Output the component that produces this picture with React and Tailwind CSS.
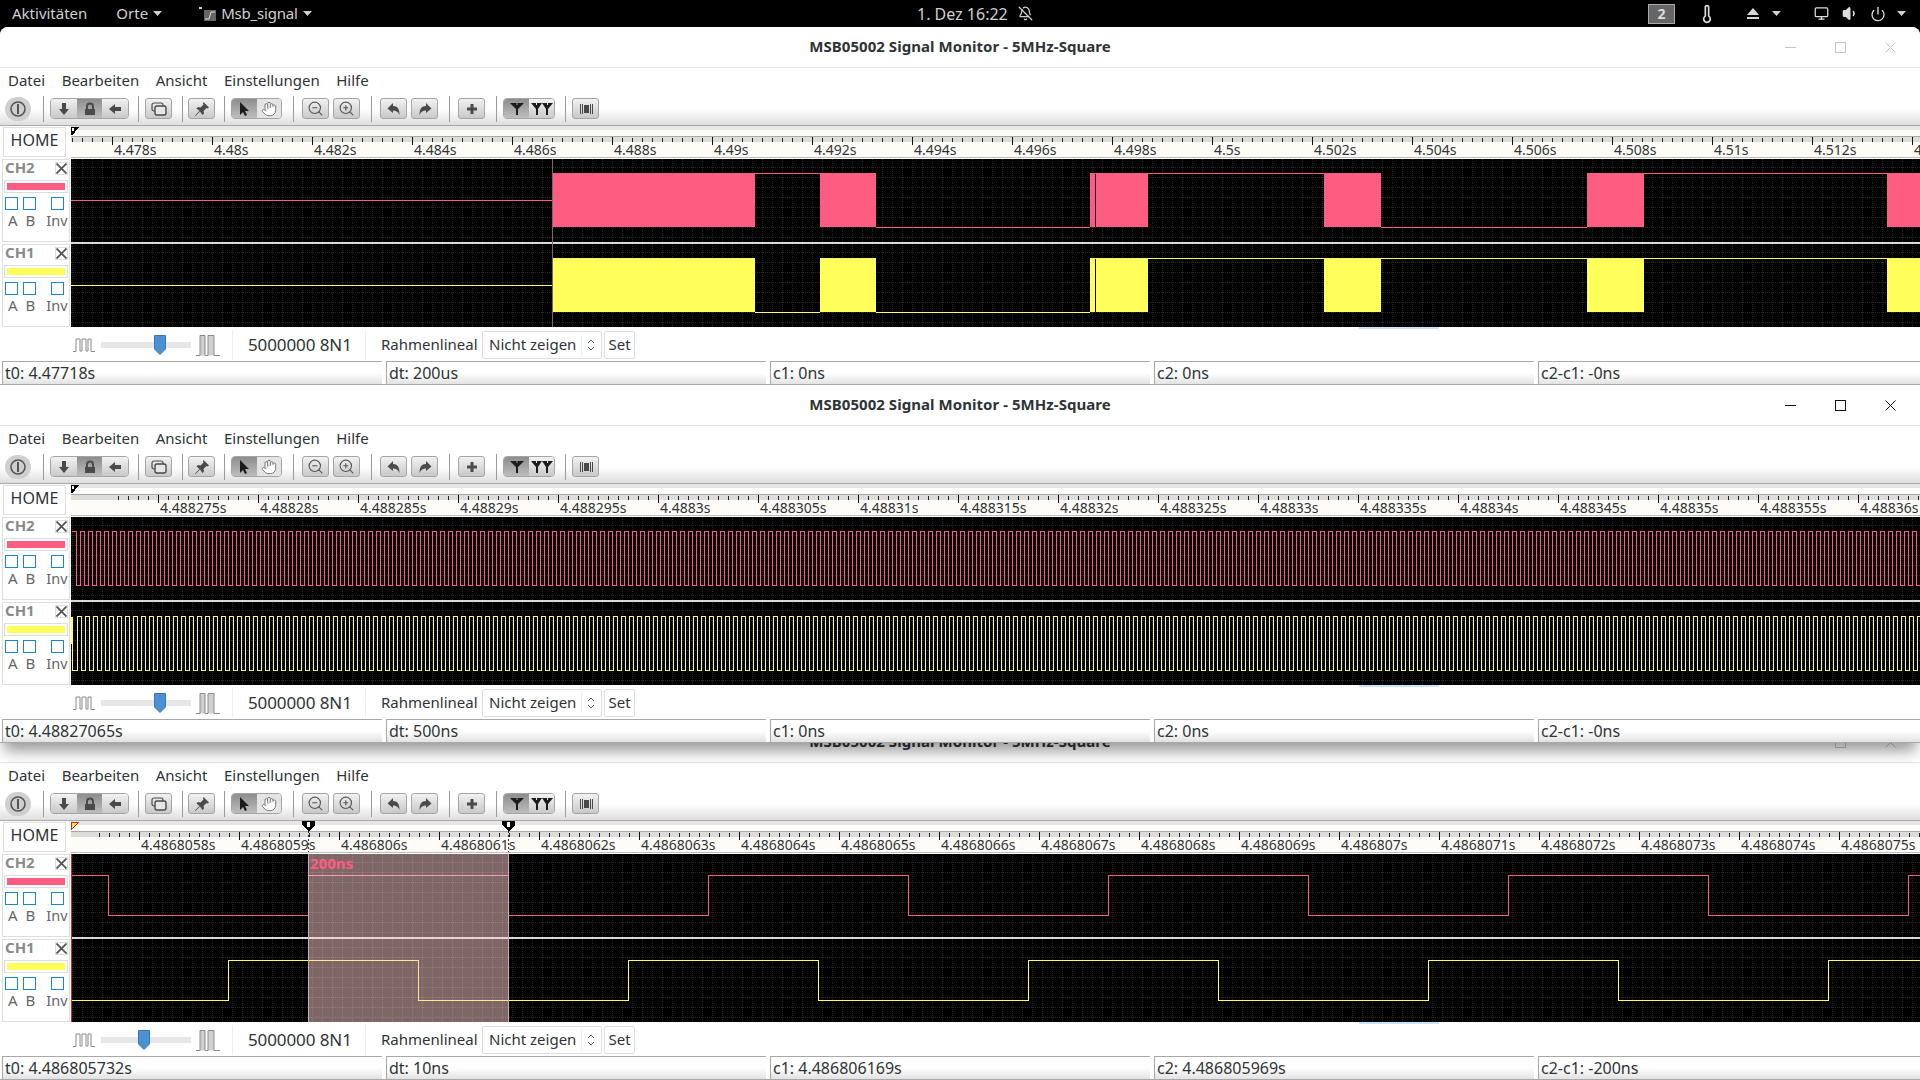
import { useId } from 'react';
import { BellOff, Hand, Monitor, Power, Thermometer, Volume1, ZoomIn, ZoomOut } from 'lucide-react';

const PINK = '#ff5c82';
const YELLOW = '#ffff5c';

// builds the 400ns square wave of the middle window, period is 8px
const squareWave = (start, y0, y1, end) => {
  let d = `M${start} ${y0}`;
  let x = start;
  let y = y0;
  while (x < end) {
    x += 4;
    d += `H${x}`;
    y = y === y0 ? y1 : y0;
    d += `V${y}`;
  }
  return d;
};

const blocks1 = [[552, 755], [820, 876], [1090, 1148], [1324, 1381], [1587, 1644], [1887, 1920]];

const windows = [
  {
    focused: false,
    rounded: true,
    firstTick: 112,
    labels: ['4.478s', '4.48s', '4.482s', '4.484s', '4.486s', '4.488s', '4.49s', '4.492s', '4.494s', '4.496s', '4.498s', '4.5s', '4.502s', '4.504s', '4.506s', '4.508s', '4.51s', '4.512s', '4.514s'],
    ch2: { blocks: blocks1, d: 'M71 41.5H552M755 14.5H820M876 68.5H1090M1148 14.5H1324M1381 68.5H1587M1644 14.5H1887' },
    ch1: { blocks: blocks1, d: 'M71 41.5H552M755 68.5H820M876 68.5H1090M1148 14.5H1324M1381 14.5H1587M1644 14.5H1887' },
    status: ['t0: 4.47718s', 'dt: 200us', 'c1: 0ns', 'c2: 0ns', 'c2-c1: -0ns'],
    slider: 'left-[53px]',
  },
  {
    focused: true,
    firstTick: 158,
    labels: ['4.488275s', '4.48828s', '4.488285s', '4.48829s', '4.488295s', '4.4883s', '4.488305s', '4.48831s', '4.488315s', '4.48832s', '4.488325s', '4.48833s', '4.488335s', '4.48834s', '4.488345s', '4.48835s', '4.488355s', '4.48836s'],
    ch2: { d: squareWave(72, 14.5, 68.5, 1920) },
    ch1: { d: 'M71.5 14.5V41.5M72.5 14.5V68.5H77.5V14.5' + squareWave(77.5, 14.5, 68.5, 1920).replace('M77.5 14.5', '') },
    status: ['t0: 4.48827065s', 'dt: 500ns', 'c1: 0ns', 'c2: 0ns', 'c2-c1: -0ns'],
    slider: 'left-[53px]',
  },
  {
    focused: false,
    firstTick: 139,
    labels: ['4.4868058s', '4.4868059s', '4.486806s', '4.4868061s', '4.4868062s', '4.4868063s', '4.4868064s', '4.4868065s', '4.4868066s', '4.4868067s', '4.4868068s', '4.4868069s', '4.486807s', '4.4868071s', '4.4868072s', '4.4868073s', '4.4868074s', '4.4868075s'],
    ch2: { d: 'M71 21.5H108.5V61.5H308.5M308.5 21.5H508.5M508.5 61.5H708.5V21.5H908.5V61.5H1108.5V21.5H1308.5V61.5H1508.5V21.5H1708.5V61.5H1908.5V21.5H1920' },
    ch1: { d: 'M71 61.5H228.5V21.5H418.5V61.5H628.5V21.5H818.5V61.5H1028.5V21.5H1218.5V61.5H1428.5V21.5H1618.5V61.5H1828.5V21.5H1920' },
    status: ['t0: 4.486805732s', 'dt: 10ns', 'c1: 4.486806169s', 'c2: 4.486805969s', 'c2-c1: -200ns'],
    slider: 'left-[37px]',
    selection: true,
  },
];

function Caret({ className = '' }) {
  return (
    <svg width="9" height="5" viewBox="0 0 9 5" className={className}>
      <polygon points="0,0 9,0 4.5,5" fill="#d0d0d0" />
    </svg>
  );
}

function TopBar() {
  return (
    <div className="h-[27px] bg-black flex items-center text-[15px] text-[#d0d0d0] shrink-0">
      <div className="w-[917px] flex items-center shrink-0">
        <span className="ml-[12px]">Aktivitäten</span>
        <span className="ml-[29px]">Orte</span>
        <Caret className="ml-[5px]" />
        <svg width="18" height="16" viewBox="0 0 18 16" className="ml-[37px]">
          <rect x="0" y="1" width="3" height="2" fill="#ccc" />
          <rect x="5" y="4" width="12" height="11" fill="#666" />
          <path d="M6 13h4l2-7h4" fill="none" stroke="#ddd" strokeWidth="1" />
        </svg>
        <span className="ml-[4px] tracking-[-0.2px]">Msb_signal</span>
        <Caret className="ml-[5px]" />
      </div>
      <span className="text-[16px]">1. Dez 16:22</span>
      <BellOff size={15} strokeWidth={2} className="ml-[10px] text-[#d0d0d0]" />
      <div className="ml-auto flex items-center pr-[14px]">
        <div className="w-[27px] h-[20px] bg-[#666] border border-[#aaa] flex items-center justify-center text-[14px] font-bold text-[#ddd]">2</div>
        <Thermometer size={20} strokeWidth={2} className="ml-[22px] text-[#ddd]" />
        <svg width="12" height="12" viewBox="0 0 12 12" className="ml-[30px]">
          <polygon points="6,0 12,7 0,7" fill="#d8d8d8" />
          <rect x="0" y="9" width="12" height="2" fill="#d8d8d8" />
        </svg>
        <Caret className="ml-[13px]" />
        <Monitor size={15} strokeWidth={2} className="ml-[33px] text-[#ddd]" />
        <Volume1 size={17} strokeWidth={2} fill="#ddd" className="ml-[13px] text-[#ddd]" />
        <Power size={16} strokeWidth={2} className="ml-[11px] text-[#ddd]" />
        <Caret className="ml-[11px]" />
      </div>
    </div>
  );
}

function TitleBar({ focused, rounded }) {
  const stroke = focused ? '#111' : '#c4c4c4';
  return (
    <div className={`h-[41px] shrink-0 grid grid-cols-[1fr_auto_1fr] items-center border-b border-[#e4e4e4] bg-white ${rounded ? 'rounded-t-[8px]' : ''}`}>
      <div />
      <div className="pb-px font-bold text-[15px] tracking-[0.05px] text-[#2e3436]">MSB05002 Signal Monitor - 5MHz-Square</div>
      <div className="flex justify-end items-center gap-[39px] pr-[24px]">
        <svg width="11" height="11" viewBox="0 0 11 11"><path d="M0 5.5H11" stroke={stroke} /></svg>
        <svg width="11" height="11" viewBox="0 0 11 11"><rect x="0.5" y="0.5" width="10" height="10" fill="none" stroke={stroke} /></svg>
        <svg width="11" height="11" viewBox="0 0 11 11"><path d="M0.5 0.5L10.5 10.5M10.5 0.5L0.5 10.5" stroke={stroke} /></svg>
      </div>
    </div>
  );
}

function MenuBar() {
  return (
    <div className="h-[25px] shrink-0 flex items-center gap-[16.5px] pl-[8px] pb-px text-[15px] text-[#2e3436] bg-white">
      <span>Datei</span>
      <span>Bearbeiten</span>
      <span>Ansicht</span>
      <span>Einstellungen</span>
      <span>Hilfe</span>
    </div>
  );
}

function Sep({ className = '' }) {
  return <div className={`w-px h-[26px] bg-[#9a9a9a] shrink-0 ${className}`} />;
}

function ToolBtn({ children, className = '' }) {
  return (
    <div className={`w-[27px] h-[21px] shrink-0 flex items-center justify-center rounded-[3px] border border-[#a4a4a4] bg-gradient-to-b from-[#f2f2f2] to-[#c9c9c9] ${className}`}>
      {children}
    </div>
  );
}

function Seg({ children, active, className = '' }) {
  return (
    <div className={`h-full flex-1 flex items-center justify-center ${active ? 'bg-gradient-to-b from-[#8e8e8e] to-[#bdbdbd]' : 'bg-gradient-to-b from-[#f2f2f2] to-[#c9c9c9]'} ${className}`}>
      {children}
    </div>
  );
}

function Glyph({ children }) {
  return <svg width="16" height="16" viewBox="0 0 16 16" fill="#4a4a4a">{children}</svg>;
}

function ToolBar() {
  return (
    <div className="h-[33px] shrink-0 flex items-center pl-[5px] pb-[1px] border-b border-[#a8a8a8] bg-gradient-to-b from-white via-white to-[#dedede]">
      <div className="w-[26px] h-[24px] shrink-0 rounded-full bg-[#cfcfcf] flex items-center justify-center">
        <svg width="18" height="18" viewBox="0 0 18 18">
          <circle cx="9" cy="9" r="7" fill="none" stroke="#555" strokeWidth="1.6" />
          <rect x="8" y="4" width="2" height="10" fill="#555" />
        </svg>
      </div>
      <Sep className="ml-[12px]" />
      <div className="ml-[6px] w-[79px] h-[21px] shrink-0 flex rounded-[4px] border border-[#a4a4a4] overflow-hidden">
        <Seg><Glyph><path d="M6 2h4v6h3l-5 6-5-6h3z" /></Glyph></Seg>
        <Seg active><Glyph><path d="M4 8V5.5a4 4 0 0 1 8 0V8h1v6H3V8zm2 0h4V5.5a2 2 0 0 0-4 0z" /></Glyph></Seg>
        <Seg><Glyph><path d="M14 6v4H8v3L2 8l6-5v3z" /></Glyph></Seg>
      </div>
      <Sep className="ml-[9px]" />
      <ToolBtn className="ml-[6px]">
        <Glyph>
          <rect x="1" y="2" width="11" height="8" rx="2" fill="none" stroke="#4a4a4a" strokeWidth="1.2" />
          <rect x="4" y="5" width="11" height="9" rx="2" fill="#e6e6e6" stroke="#4a4a4a" strokeWidth="1.4" />
        </Glyph>
      </ToolBtn>
      <Sep className="ml-[10px]" />
      <ToolBtn className="ml-[5px]">
        <Glyph><path d="M9.5 1l5.5 5.5-1.5 1-1-.5-3 3 .5 2.5-1.5 1.5L6 10.5 1.500 15 1 14.500 5.500 10 2.500 7.500 4 6l2.500.5 3-3-.5-1z" /></Glyph>
      </ToolBtn>
      <Sep className="ml-[9px]" />
      <div className="ml-[6px] w-[51px] h-[21px] shrink-0 flex rounded-[4px] border border-[#a4a4a4] overflow-hidden">
        <Seg active><Glyph><path d="M4 1v13l3-3 2 4 2-1-2-4h4z" fill="#1c1c1c" /></Glyph></Seg>
        <Seg className="bg-none bg-[#e4e4e4]"><Hand size={16} strokeWidth={1.5} fill="#fff" className="text-[#777]" /></Seg>
      </div>
      <Sep className="ml-[11px]" />
      <ToolBtn className="ml-[8px]"><ZoomOut size={17} strokeWidth={1.6} className="text-[#555]" /></ToolBtn>
      <ToolBtn className="ml-[4px]"><ZoomIn size={17} strokeWidth={1.6} className="text-[#555]" /></ToolBtn>
      <Sep className="ml-[11px]" />
      <ToolBtn className="ml-[8px]"><Glyph><path d="M7 2L1.5 7.5 7 12V9.5c3 0 5 1 6.5 4.5 0-6-2-9-6.5-9z" /></Glyph></ToolBtn>
      <ToolBtn className="ml-[4px]"><Glyph><path d="M9 2l5.5 5.5L9 12V9.5c-3 0-5 1-6.5 4.5 0-6 2-9 6.5-9z" /></Glyph></ToolBtn>
      <Sep className="ml-[11px]" />
      <ToolBtn className="ml-[8px]"><Glyph><path d="M6.5 3h3v3.5H13v3H9.500V13h-3V9.500H3v-3h3.500z" /></Glyph></ToolBtn>
      <Sep className="ml-[11px]" />
      <div className="ml-[6px] w-[52px] h-[21px] shrink-0 flex rounded-[4px] border border-[#a4a4a4] overflow-hidden">
        <Seg active><Glyph><path d="M1 2h6.500v2h1V2H15L9 8v6H7V8z" fill="#1c1c1c" /></Glyph></Seg>
        <Seg>
          <svg width="22" height="16" viewBox="0 0 22 16" fill="#1c1c1c">
            <path d="M0 2h5v2h1V2h5L7 8v6H5V8zM11 2h5v2h1V2h5l-5 6v6h-2V8z" />
          </svg>
        </Seg>
      </div>
      <Sep className="ml-[10px]" />
      <ToolBtn className="ml-[6px]">
        <Glyph>
          <rect x="2" y="3" width="1" height="10" />
          <rect x="4" y="3" width="1" height="10" />
          <rect x="6" y="4" width="5" height="8" />
          <rect x="12" y="3" width="1" height="10" />
          <rect x="14" y="3" width="1" height="10" />
        </Glyph>
      </ToolBtn>
    </div>
  );
}

function Ruler({ firstTick, labels, selection }) {
  const ticks = [];
  for (let x = firstTick - 40; x < 1920; x += 10) ticks.push(x);
  const minor = ticks.map((x) => `M${x + 0.5} 12V16`).join('');
  const major = ticks.filter((x) => (x - firstTick) % 100 === 0).map((x) => `M${x + 0.5} 11V19`).join('');
  return (
    <div className="relative flex-1 h-[32px] overflow-hidden bg-[#fffcf8]">
      <svg viewBox="71 0 1849 32" className="absolute inset-0 w-[1849px] h-[32px]" shapeRendering="crispEdges">
        <rect x="71" y="0" width="1849" height="4" fill="#e6e6e6" />
        <rect x="71" y="10" width="1849" height="6" fill="#dcdcdc" />
        <rect x="71" y="10" width="1849" height="1" fill="#a8a8a8" />
        <rect x="71" y="31" width="1849" height="1" fill="#bdbdbd" />
        <path d={minor} stroke="#222" />
        <path d={major} stroke="#111" />
        {selection ? (
          <>
            <polygon points="71,1 79,1 71,9" fill="#ffe840" stroke="#e02020" />
            {[308, 508].map((x) => (
              <g key={x}>
                <polygon points={`${x - 6},0 ${x + 7},0 ${x + 7},4 ${x + 1},10 ${x - 6},4`} fill="#000" />
                <rect x={x - 1} y="1" width="3" height="5" fill="#fff" />
                <path d={`M${x + 0.5} 10V31`} stroke="#333" strokeDasharray="2 2" />
              </g>
            ))}
          </>
        ) : (
          <>
            <polygon points="71,1 79,1 75,6 73,9 71,9" fill="#000" />
            <rect x="72" y="2" width="2" height="3" fill="#fff" />
          </>
        )}
      </svg>
      {/* one 100px cell per major tick */}
      <div className="relative flex pt-[16px] text-[14px] leading-[16px] text-[#2e3436]" style={{ paddingLeft: firstTick + 2 - 71 }}>
        {labels.map((l) => (
          <span key={l} className="w-[100px] shrink-0 whitespace-nowrap">{l}</span>
        ))}
      </div>
    </div>
  );
}

function ChannelPanel({ name, color }) {
  return (
    <div className="ml-[2px] mr-px w-[68px] h-full shrink-0 border border-[#dedede] flex flex-col relative">
      <div className="flex items-center justify-between h-[15px] pl-[2px] pr-[1px]">
        <span className="font-bold text-[15px] leading-[15px] text-[#8a8a8a]">{name}</span>
        <div className="w-[13px] h-[13px] mt-[2px] border border-[#ddd] flex items-center justify-center">
          <svg width="11" height="11" viewBox="0 0 11 11"><path d="M0.500 0.500L10.500 10.500M10.500 0.500L0.500 10.500" stroke="#555" strokeWidth="1.800" /></svg>
        </div>
      </div>
      <div className="mt-[5px] ml-[1px] mr-[1px] h-[13px] border border-[#ddd] p-[2px]">
        <div className="h-full" style={{ backgroundColor: color }} />
      </div>
      <div className="flex mt-[4px] ml-[2px]">
        <div className="w-[13px] h-[13px] border border-[#1b84d6]" />
        <div className="w-[13px] h-[13px] border border-[#1b84d6] ml-[5px]" />
        <div className="w-[13px] h-[13px] border border-[#1b84d6] ml-[15px]" />
      </div>
      <div className="flex text-[15px] leading-[16px] text-[#666] mt-[2px] ml-[5px] whitespace-nowrap">
        <span>A</span>
        <span className="ml-[8px]">B</span>
        <span className="ml-[11px] text-[14.5px]">Inv</span>
      </div>
    </div>
  );
}

function Plot({ color, blocks = [], d, notch }) {
  const gridId = useId();
  return (
    <svg viewBox="71 0 1849 83" className="w-[1849px] h-[83px] shrink-0 block bg-black" shapeRendering="crispEdges">
      <defs>
        <pattern id={gridId} x="71" y="0" width="10" height="10" patternUnits="userSpaceOnUse">
          <path d="M1.500 0V10M0 8.500H10" stroke="#282828" strokeDasharray="1 1" fill="none" />
        </pattern>
      </defs>
      <rect x="71" y="0" width="1849" height="83" fill={`url(#${gridId})`} />
      {blocks.map(([a, b]) => (
        <rect key={a} x={a} y="14" width={b - a} height="54" fill={color} />
      ))}
      {notch ? <rect x="1094.500" y="15" width="1" height="53" fill="#000" /> : null}
      <path d={d} fill="none" stroke={color} />
    </svg>
  );
}

function Plots({ win }) {
  const hasBlocks = !!win.ch2.blocks;
  return (
    <div className="relative shrink-0 mt-px">
      <div className="flex h-[83px]">
        <ChannelPanel name="CH2" color={PINK} />
        <Plot color={PINK} blocks={win.ch2.blocks} d={win.ch2.d} notch={hasBlocks} />
      </div>
      <div className="ml-[71px] h-[2px] bg-[#d8d8d8]" />
      <div className="flex h-[83px]">
        <ChannelPanel name="CH1" color={YELLOW} />
        <Plot color={YELLOW} blocks={win.ch1.blocks} d={win.ch1.d} notch={hasBlocks} />
      </div>
      {hasBlocks ? <div className="absolute top-0 bottom-0 left-[552px] w-px bg-[#7f6666]" /> : null}
      {win.selection ? (
        <>
          <div className="absolute top-0 bottom-0 left-[71px] w-px bg-[#e02020]" />
          <div className="absolute top-0 bottom-0 left-[308px] w-[201px] bg-[rgba(255,205,205,0.5)] border-x border-x-[#c8b0b0]">
            <span className="block pl-[1px] pt-[0px] font-bold text-[15px] leading-[18px] text-[#ff5c82]">200ns</span>
          </div>
        </>
      ) : null}
    </div>
  );
}

function Controls({ slider }) {
  return (
    <div className="relative h-[34px] shrink-0 flex items-center pt-px text-[15px] text-[#2e3436]">
      <div className="absolute top-0 left-[1359px] w-[80px] h-[2px] bg-[#c8e4f8]" />
      <svg width="22" height="14" viewBox="0 0 22 14" className="ml-[73px] shrink-0" fill="none" stroke="#8a8a8a">
        <path d="M0 13.500H3V1H7V13H9V1H13V13H15V1H18V13.500H22" />
      </svg>
      <div className="relative ml-[6px] w-[90px] h-[6px] bg-[#e6e6e6] shrink-0">
        <svg width="12" height="20" viewBox="0 0 12 20" className={`absolute top-[-7px] ${slider}`}>
          <path d="M0.500 0.500H11.500V14L6 19.500L0.500 14z" fill="#4a90d2" stroke="#3a78b4" />
        </svg>
      </div>
      <svg width="24" height="22" viewBox="0 0 24 22" className="ml-[5px] shrink-0" fill="#d0d0d0" stroke="#8a8a8a">
        <path d="M0 21.500H4V1.500H9V21.500H12V1.500H18V21.500H24" />
      </svg>
      <div className="ml-[12px] w-px h-[30px] bg-[#eeeeee] shrink-0" />
      <span className="ml-[15px] w-[102px] text-[17px] tracking-[-0.1px] whitespace-nowrap">5000000 8N1</span>
      <div className="ml-[15px] w-px h-[30px] bg-[#eeeeee] shrink-0" />
      <span className="ml-[15px] w-[101px] whitespace-nowrap">Rahmenlineal</span>
      <div className="w-[120px] h-[28px] border border-[#dddddd] flex items-center shrink-0 rounded-[2px]">
        <span className="pl-[6px] w-[98px] whitespace-nowrap">Nicht zeigen</span>
        <div className="w-px h-[20px] bg-[#eeeeee]" />
        <svg width="8" height="14" viewBox="0 0 8 14" className="ml-[5px]" fill="none" stroke="#555">
          <path d="M1 5L4 2L7 5M1 9L4 12L7 9" />
        </svg>
      </div>
      <div className="ml-[2px] w-[31px] h-[28px] border border-[#dddddd] flex items-center justify-center shrink-0 rounded-[2px]">Set</div>
    </div>
  );
}

function StatusBar({ items }) {
  return (
    <div className="h-[24px] shrink-0 flex gap-[4px] pl-[2px] border-b border-[#a8a8a8] text-[16px] leading-[23px] text-[#2e3436]">
      {items.map((text, i) => (
        <div
          key={text + i}
          className={`${i === 4 ? 'flex-1' : 'w-[380px]'} h-full pl-[2px] border-t border-l border-[#a8a8a8] bg-gradient-to-b from-white via-white to-[#e2e2e2] whitespace-nowrap overflow-hidden`}
        >
          {text}
        </div>
      ))}
    </div>
  );
}

function AppWindow({ win, className = '' }) {
  return (
    <div className={`h-[358px] shrink-0 flex flex-col bg-white ${win.rounded ? 'rounded-t-[8px]' : ''} ${className}`}>
      <TitleBar focused={win.focused} rounded={win.rounded} />
      <MenuBar />
      <ToolBar />
      <div className="flex h-[32px] shrink-0">
        <div className="w-[71px] shrink-0 pl-[3px] pt-px">
          <div className="w-[63px] h-[30px] pb-[5px] border border-[#dedede] flex items-center justify-center text-[16px] text-[#2e3436]">HOME</div>
        </div>
        <Ruler firstTick={win.firstTick} labels={win.labels} selection={win.selection} />
      </div>
      <Plots win={win} />
      <Controls slider={win.slider} />
      <StatusBar items={win.status} />
    </div>
  );
}

export default function App() {
  return (
    <div className="w-[1920px] h-[1080px] overflow-hidden bg-black flex flex-col font-['Noto_Sans',sans-serif]">
      <TopBar />
      <AppWindow win={windows[0]} />
      <AppWindow win={windows[1]} className="relative z-10 shadow-[0_12px_14px_-4px_rgba(0,0,0,0.4)]" />
      <AppWindow win={windows[2]} className="-mt-[21px]" />
    </div>
  );
}
